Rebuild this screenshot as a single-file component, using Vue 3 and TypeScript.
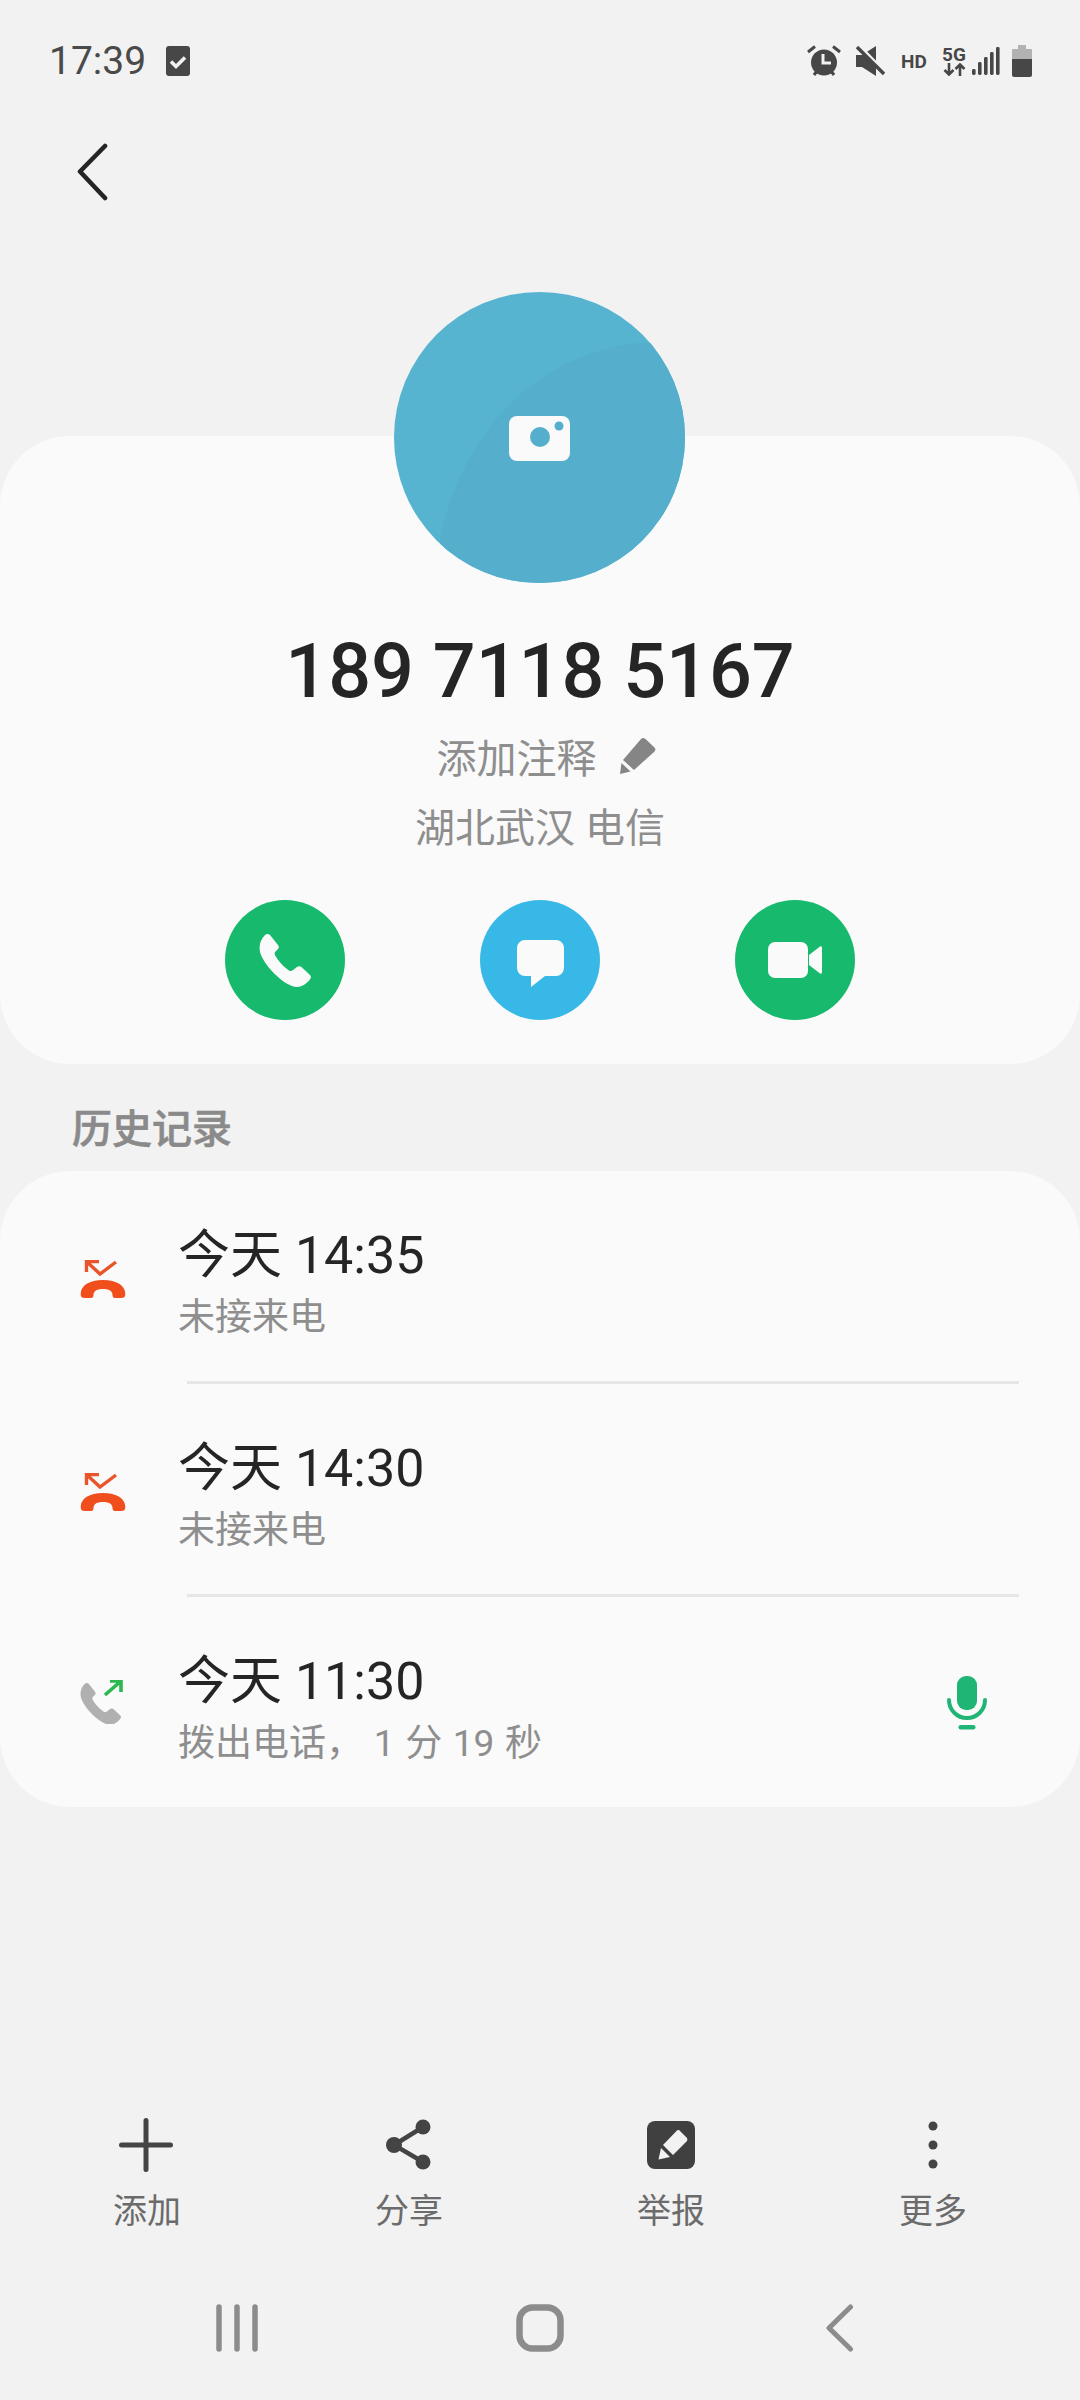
<script setup lang="ts">
interface CallRow {
  id: number
  kind: 'missed' | 'out'
  time: string
  detail: string
  recorded?: boolean
}

const handset =
  'M6 1C8-.5 10 0 11 1L19 11C20 12.5 20 14 19 15L16 18C15.5 19 15.5 20 16 21C19 27 25 33 30 36.5C31.5 37.5 33 37 34 36L38 33C39.5 32 41.5 32 43 33.5L51 41C52.5 42.5 52 44.5 50.5 46C46 51.5 40 54.5 33 52C22 48 7 33 2 21C-1 13 1 6 6 1Z'

const calls: CallRow[] = [
  { id: 1, kind: 'missed', time: '今天 14:35', detail: '未接来电' },
  { id: 2, kind: 'missed', time: '今天 14:30', detail: '未接来电' },
  { id: 3, kind: 'out', time: '今天 11:30', detail: '拨出电话， 1 分 19 秒', recorded: true },
]

const signalBars = [
  { x: 0, h: 6 },
  { x: 6, h: 13 },
  { x: 12, h: 18 },
  { x: 18, h: 23 },
  { x: 24, h: 28 },
]
</script>

<template>
  <div class="page">
    <div class="status">
      <div class="status-left">
        <span class="clock">17:39</span>
        <svg class="chk" width="24" height="30" viewBox="0 0 24 30">
          <rect width="24" height="30" rx="3" fill="#474747" />
          <path d="M5 15.5l5 5 9-9" fill="none" stroke="#f2f2f2" stroke-width="3.6" />
        </svg>
      </div>
      <div class="status-right">
        <svg class="s-alarm" width="34" height="32" viewBox="0 0 34 32">
          <path d="M1 7L8 1.500M33 7L26 1.500" stroke="#474747" stroke-width="3" />
          <path d="M7 30l3-4M27 30l-3-4" stroke="#474747" stroke-width="3" />
          <circle cx="17" cy="17.500" r="13" fill="#474747" />
          <path d="M16 9v9h8" fill="none" stroke="#f2f2f2" stroke-width="3" />
        </svg>
        <svg class="s-mute" width="29" height="30" viewBox="0 0 29 30">
          <path d="M0 9H6L20 0V30L6 21H0Z" fill="#474747" />
          <path d="M3 0L29 27" stroke="#f2f2f2" stroke-width="4" />
          <path d="M1 1L28 28" stroke="#474747" stroke-width="3.400" />
        </svg>
        <span class="s-hd">HD</span>
        <div class="s-5g">
          <span>5G</span>
          <svg width="23" height="13" viewBox="0 0 23 13">
            <path d="M6 0V11M1.500 7L6 11.500L10.500 7M17 13V2M12.500 6L17 1.500L21.500 6" fill="none" stroke="#474747" stroke-width="2.600" />
          </svg>
        </div>
        <svg class="s-signal" width="28" height="28" viewBox="0 0 28 28">
          <rect v-for="bar in signalBars" :key="bar.x" :x="bar.x" :y="28 - bar.h" width="3.600" :height="bar.h" rx="1.400" fill="#474747" />
        </svg>
        <svg class="s-bat" width="20" height="32" viewBox="0 0 20 32">
          <path d="M6 0H14V4H19A1 1 0 0 1 20 5V14H0V5A1 1 0 0 1 1 4H6Z" fill="#b2b2b2" />
          <path d="M0 14H20V30A2 2 0 0 1 18 32H2A2 2 0 0 1 0 30Z" fill="#474747" />
        </svg>
      </div>
    </div>

    <div class="topbar">
      <svg width="32" height="58" viewBox="0 0 32 58">
        <path d="M28 3L3 28.500L28 55" fill="none" stroke="#252525" stroke-width="4.600" stroke-linecap="round" stroke-linejoin="round" />
      </svg>
    </div>

    <svg class="avatar" width="291" height="291" viewBox="0 0 291 291">
      <defs>
        <clipPath id="avatar-clip"><circle cx="145.500" cy="145.500" r="145.500" /></clipPath>
      </defs>
      <g clip-path="url(#avatar-clip)">
        <rect width="291" height="291" fill="#56b4d0" />
        <path d="M46 245C72 130 150 60 246 51L300 51V300H46Z" fill="#55afcc" />
      </g>
      <rect x="115" y="124" width="61" height="45" rx="8" fill="#fafafa" />
      <circle cx="146" cy="145" r="10" fill="#55afcc" />
      <circle cx="165" cy="134" r="4.500" fill="#55afcc" />
    </svg>

    <section class="profile">
      <h1 class="number">189 7118 5167</h1>
      <div class="note">
        <span>添加注释</span>
        <svg width="37" height="38" viewBox="0 0 37 38">
          <path d="M21 2Q23 0 25.500 2L34.500 10.500Q36.500 13 34 15L14 33L3 23Z" fill="#858585" />
          <path d="M1.500 26L10.500 34.500L0 37Z" fill="#858585" />
        </svg>
      </div>
      <div class="location">湖北武汉 电信</div>
      <div class="actions">
        <div class="action green">
          <svg width="52" height="53" viewBox="0 0 52 53"><path :d="handset" fill="#fafafa" /></svg>
        </div>
        <div class="action blue">
          <svg class="bubble" width="47" height="47" viewBox="0 0 47 47">
            <path d="M8 0H39A8 8 0 0 1 47 8V28A8 8 0 0 1 39 36H28L14 47V36H8A8 8 0 0 1 0 28V8A8 8 0 0 1 8 0Z" fill="#fafafa" />
          </svg>
        </div>
        <div class="action green">
          <svg width="54" height="36" viewBox="0 0 54 36">
            <rect width="40" height="36" rx="7" fill="#fafafa" />
            <path d="M41 13L52 4.500C53 4 54 4.500 54 6V30C54 31.500 53 32 52 31.500L41 23Z" fill="#fafafa" />
          </svg>
        </div>
      </div>
    </section>

    <div class="history-label">历史记录</div>

    <section class="history">
      <template v-for="(call, i) in calls" :key="call.id">
        <div v-if="i > 0" class="divider"></div>
        <div class="row">
          <div class="row-icon" :class="call.kind">
            <svg v-if="call.kind === 'missed'" width="46" height="38" viewBox="0 0 46 38">
              <path d="M6.500 12V1.500H19M6.500 1.500L20 14L36 2" fill="none" stroke="#e9552b" stroke-width="3.400" />
              <path d="M1 36C-1 27 8 20 23 20C38 20 47 27 45 36C44.500 38 42 38 39 38H35C33 38 32.500 36.500 32.500 35C32.500 31 29 29 23 29C17 29 13.500 31 13.500 35C13.500 36.500 13 38 11 38H7C4 38 1.500 38 1 36Z" fill="#f04e1c" />
            </svg>
            <svg v-else width="44" height="44" viewBox="0 0 44 44">
              <g transform="translate(0 3) scale(.79)"><path :d="handset" fill="#b0b0b0" /></g>
              <path d="M25 15L41 1M30 1H41V12" fill="none" stroke="#2cb84f" stroke-width="3.600" />
            </svg>
          </div>
          <div class="row-text">
            <div class="time">{{ call.time }}</div>
            <div class="detail">{{ call.detail }}</div>
          </div>
          <svg v-if="call.recorded" class="mic" width="40" height="54" viewBox="0 0 40 54">
            <rect x="10" y="0" width="20" height="34" rx="9" fill="#1fb574" />
            <path d="M2 24C2 34 10 42 20 42C30 42 38 34 38 24" fill="none" stroke="#1fb574" stroke-width="4" stroke-linecap="round" />
            <rect x="11.500" y="49" width="17" height="4.500" rx="2.200" fill="#1fb574" />
          </svg>
        </div>
      </template>
    </section>

    <div class="spacer"></div>

    <nav class="tools">
      <div class="tool">
        <svg width="60" height="60" viewBox="0 0 60 60">
          <path d="M29 5.500V54.500M4.500 30H53.500" stroke="#444" stroke-width="5" stroke-linecap="round" />
        </svg>
        <span>添加</span>
      </div>
      <div class="tool">
        <svg width="60" height="60" viewBox="0 0 60 60">
          <path d="M44 12L15 30L44 47" fill="none" stroke="#444" stroke-width="4.500" />
          <circle cx="15" cy="30" r="8" fill="#444" />
          <circle cx="44" cy="12" r="7.500" fill="#444" />
          <circle cx="44" cy="47" r="7.500" fill="#444" />
        </svg>
        <span>分享</span>
      </div>
      <div class="tool">
        <svg width="60" height="60" viewBox="0 0 60 60">
          <rect x="6" y="6" width="48" height="48" rx="8" fill="#404040" />
          <path d="M38 15L46 23C46.500 24 46.500 25 46 26L32 40L22 30L36 15.500C36.500 15 37.500 15 38 15Z" fill="#f2f2f2" />
          <path d="M20 33L29 42L17.500 44.500Z" fill="#f2f2f2" />
        </svg>
        <span>举报</span>
      </div>
      <div class="tool">
        <svg width="60" height="60" viewBox="0 0 60 60">
          <circle cx="30" cy="11" r="4.500" fill="#444" />
          <circle cx="30" cy="30" r="4.500" fill="#444" />
          <circle cx="30" cy="49" r="4.500" fill="#444" />
        </svg>
        <span>更多</span>
      </div>
    </nav>

    <nav class="sysnav">
      <svg width="42" height="48" viewBox="0 0 42 48">
        <path d="M3 3V45M21 3V45M39 3V45" stroke="#8c8c8c" stroke-width="5.500" stroke-linecap="round" />
      </svg>
      <svg class="nav-home" width="48" height="48" viewBox="0 0 48 48">
        <rect x="3.500" y="3.500" width="41" height="41" rx="13" fill="none" stroke="#8c8c8c" stroke-width="6.500" />
      </svg>
      <svg class="nav-back" width="28" height="48" viewBox="0 0 28 48">
        <path d="M24.500 3L3 24L24.500 45" fill="none" stroke="#8c8c8c" stroke-width="5" stroke-linecap="round" stroke-linejoin="round" />
      </svg>
    </nav>
  </div>
</template>

<style>
html,
body {
  margin: 0;
  background: #f2f2f2;
}
</style>

<style scoped>
.page {
  width: 1080px;
  height: 2400px;
  display: flex;
  flex-direction: column;
  background: #f2f2f2;
  font-family: Roboto, "Noto Sans CJK SC", sans-serif;
  overflow: hidden;
}
.status {
  height: 80px;
  flex: none;
  padding: 42px 48px 0 49px;
  box-sizing: border-box;
  display: flex;
  justify-content: space-between;
  align-items: center;
}
.status-left,
.status-right {
  display: flex;
  align-items: center;
}
.clock {
  font-size: 39px;
  line-height: 44px;
  color: #4a4a4a;
}
.chk {
  margin-left: 20px;
}
.s-mute {
  margin-left: 15px;
}
.s-hd {
  margin-left: 16px;
  width: 26px;
  font-size: 19px;
  font-weight: 700;
  color: #474747;
}
.s-5g {
  margin-left: 15px;
  width: 24px;
  display: flex;
  flex-direction: column;
  align-items: center;
  font-size: 19px;
  line-height: 16px;
  font-weight: 700;
  color: #474747;
}
.s-signal {
  margin-left: 6px;
}
.s-bat {
  margin-left: 12px;
}
.topbar {
  height: 212px;
  flex: none;
  padding: 63px 0 0 77px;
  box-sizing: border-box;
}
.avatar {
  display: block;
  flex: none;
  margin-left: 394px;
  position: relative;
  z-index: 1;
  margin-bottom: -147px;
}
.profile {
  flex: none;
  height: 628px;
  box-sizing: border-box;
  padding-top: 190px;
  background: #fafafa;
  border-radius: 70px;
  display: flex;
  flex-direction: column;
  align-items: center;
}
.number {
  margin: 0;
  font-size: 75.5px;
  line-height: 90px;
  font-weight: 500;
  color: #252525;
}
.note {
  margin: 10px 0 0 13px;
  height: 60px;
  display: flex;
  align-items: center;
  gap: 23px;
  font-size: 40px;
  color: #8e8e8e;
}
.location {
  margin-top: 13px;
  font-size: 40px;
  line-height: 60px;
  color: #8e8e8e;
}
.actions {
  margin-top: 41px;
  display: flex;
  gap: 135px;
}
.action {
  width: 120px;
  height: 120px;
  border-radius: 50%;
  display: flex;
  align-items: center;
  justify-content: center;
}
.green {
  background: #17b96c;
}
.blue {
  background: #38b8e6;
}
.bubble {
  margin-top: 6px;
}
.history-label {
  flex: none;
  padding: 36px 0 11px 72px;
  font-size: 40px;
  line-height: 60px;
  font-weight: 500;
  -webkit-text-stroke: 0.6px #8a8a8a;
  color: #8a8a8a;
}
.history {
  flex: none;
  height: 636px;
  background: #fafafa;
  border-radius: 70px;
}
.divider {
  height: 3px;
  margin: 0 61px 0 187px;
  background: #e6e6e6;
}
.row {
  height: 210px;
  padding: 0 72px 0 80px;
  box-sizing: border-box;
  display: flex;
  align-items: center;
}
.row-icon {
  width: 98px;
  flex: none;
  display: flex;
  align-items: center;
}
.row-icon.missed {
  padding-top: 6px;
}
.row-text {
  flex: 1;
  padding-top: 20px;
}
.time {
  font-size: 52px;
  line-height: 62px;
  color: #252525;
}
.detail {
  font-size: 37px;
  line-height: 58px;
  margin-top: 2px;
  word-spacing: 1.5px;
  color: #8e8e8e;
}
.mic {
  margin: 2px 21px 0 0;
}
.spacer {
  flex: 1;
}
.tools {
  flex: none;
  padding: 0 15px 0 16px;
  display: grid;
  grid-template-columns: repeat(4, 262px);
}
.tool {
  display: flex;
  flex-direction: column;
  align-items: center;
  font-size: 34px;
  line-height: 44px;
  color: #6b6b6b;
}
.tool span {
  margin-top: 14px;
}
.sysnav {
  flex: none;
  height: 120px;
  margin-top: 47px;
  display: flex;
  align-items: flex-start;
  padding: 24px 0 0 216px;
  box-sizing: border-box;
}
.nav-home {
  margin-left: 258px;
}
.nav-back {
  margin-left: 262px;
}
</style>
